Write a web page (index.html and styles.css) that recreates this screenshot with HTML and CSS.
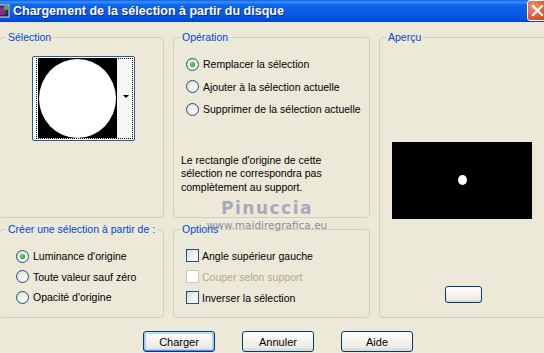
FILE: index.html
```html
<!DOCTYPE html>
<html lang="fr">
<head>
    <meta charset="UTF-8">
    <title>Chargement de la sélection à partir du disque</title>
    <link rel="stylesheet" href="styles.css">
</head>
<body>
    <div class="titlebar">
        <svg class="app-icon" width="16" height="16" viewBox="0 0 16 16">
            <rect x="1" y="2" width="14" height="12" fill="#2a2a3a"/>
            <circle cx="8" cy="8" r="4" fill="#8a2d8a"/>
            <rect x="10" y="3" width="4" height="4" fill="#3cb43c"/>
            <rect x="1" y="2" width="14" height="12" fill="none" stroke="#d8d8e8"/>
        </svg>
        <span class="title">Chargement de la sélection à partir du disque</span>
        <span class="close">
            <svg width="21" height="21" viewBox="0 0 21 21">
                <path d="M6 6 L15 15 M15 6 L6 15" stroke="#fff" stroke-width="2.2" stroke-linecap="square"/>
            </svg>
        </span>
    </div>

    <div class="panels">
        <fieldset class="group sel-group">
            <legend>Sélection</legend>
            <div class="thumb">
                <div class="thumb-img"><div class="thumb-circle"></div></div>
                <div class="thumb-strip"><span class="arrow"></span></div>
            </div>
        </fieldset>

        <fieldset class="group op-group">
            <legend>Opération</legend>
            <div class="options op-list">
                <label class="row"><span class="radio checked"></span>Remplacer la sélection</label>
                <label class="row"><span class="radio"></span>Ajouter à la sélection actuelle</label>
                <label class="row"><span class="radio"></span>Supprimer de la sélection actuelle</label>
            </div>
            <p class="note">Le rectangle d'origine de cette<br>sélection ne correspondra pas<br>complètement au support.</p>
        </fieldset>

        <fieldset class="group preview-group">
            <legend>Aperçu</legend>
            <div class="preview"><span class="dot"></span></div>
            <button class="btn small-btn"></button>
        </fieldset>

        <fieldset class="group src-group">
            <legend>Créer une sélection à partir de :</legend>
            <div class="options src-list">
                <label class="row"><span class="radio checked"></span>Luminance d'origine</label>
                <label class="row"><span class="radio"></span>Toute valeur sauf zéro</label>
                <label class="row"><span class="radio"></span>Opacité d'origine</label>
            </div>
        </fieldset>

        <fieldset class="group opt-group">
            <legend>Options</legend>
            <div class="options chk-list">
                <label class="row"><span class="check"></span>Angle supérieur gauche</label>
                <label class="row disabled"><span class="check"></span>Couper selon support</label>
                <label class="row"><span class="check"></span>Inverser la sélection</label>
            </div>
        </fieldset>
    </div>

    <div class="buttons">
        <button class="btn default">Charger</button>
        <button class="btn">Annuler</button>
        <button class="btn">Aide</button>
    </div>

    <div class="watermark">
        <span class="wm-name">Pinuccia</span>
        <span class="wm-url">www.maidiregrafica.eu</span>
    </div>
</body>
</html>
```

FILE: styles.css
```css
html, body {
    margin: 0;
    padding: 0;
}
body {
    width: 544px;
    height: 353px;
    overflow: hidden;
    position: relative;
    background: #ece9d8;
    font-family: "Liberation Sans", Arial, sans-serif;
    font-size: 10.5px;
    color: #000;
}

/* barre de titre */
.titlebar {
    height: 22px;
    display: flex;
    align-items: center;
    background: linear-gradient(#0a5fe6 0, #3b8fff 2px, #0b63ec 5px, #0858e6 15px, #0552dd 19px, #0342c0 22px);
    color: #fff;
    position: relative;
}
.app-icon {
    margin-left: -6px;
    flex: none;
}
.title {
    margin-left: 3px;
    font-weight: bold;
    font-size: 12.5px;
    text-shadow: 1px 1px 0 #0a2a8a;
}
.close {
    position: absolute;
    left: 527px;
    top: 0;
    width: 21px;
    height: 21px;
    border: 1px solid #fff;
    border-radius: 3px;
    box-sizing: border-box;
    background: radial-gradient(circle at 30% 30%, #f0937a, #e35a33 55%, #c8401c);
}
.close svg {
    display: block;
    margin: -1px;
}

/* groupes */
.panels {
    display: grid;
    grid-template-columns: 165px 197px 175px;
    grid-template-rows: 187px 95px;
    column-gap: 9px;
    row-gap: 5px;
    margin: 9px 0 0 -1px;
}
.group {
    margin: 0;
    padding: 0;
    border: 1px solid #d0d0bf;
    border-radius: 4px;
    min-width: 0;
}
.group legend {
    margin-left: 6px;
    padding: 0 2px;
    line-height: 13px;
    white-space: nowrap;
    color: #0046d5;
}
.preview-group {
    grid-column: 3;
    grid-row: 1 / 3;
}
.src-group { grid-column: 1; grid-row: 2; }
.opt-group { grid-column: 2; grid-row: 2; }

/* miniature */
.thumb {
    margin: 12px 0 0 32px;
    width: 103px;
    height: 85px;
    box-sizing: border-box;
    border: 1px solid #2f5b8c;
    border-radius: 2px;
    background: #fff;
    display: flex;
    padding: 1px 4px 2px 5px;
    position: relative;
}
.thumb::after {
    content: "";
    position: absolute;
    inset: 1px 1px 1px 3px;
    border: 1px dotted #000;
}
.thumb-img {
    width: 79px;
    height: 80px;
    background: #000;
    display: flex;
    align-items: center;
    justify-content: center;
}
.thumb-circle {
    width: 77px;
    height: 79px;
    border-radius: 50%;
    background: #fff;
}
.thumb-strip {
    flex: 1;
    background: #f6f6f4;
    position: relative;
}
.arrow {
    position: absolute;
    right: 1px;
    top: 37px;
    border-left: 3px solid transparent;
    border-right: 3px solid transparent;
    border-top: 3px solid #000;
}

/* boutons radio / cases */
.options .row {
    display: flex;
    align-items: center;
    gap: 4px;
    white-space: nowrap;
}
.op-list {
    margin: 9px 0 0 12px;
}
.op-list .row { height: 22.5px; }
.src-list {
    margin: 10px 0 0 16px;
}
.src-list .row { height: 20.5px; }
.chk-list {
    margin: 9px 0 0 12px;
}
.chk-list .row {
    height: 21px;
    gap: 3px;
}
.radio {
    width: 13px;
    height: 13px;
    box-sizing: border-box;
    border: 1px solid #1c5180;
    border-radius: 50%;
    background: radial-gradient(circle at 65% 65%, #fff 0, #f4f4f1 30%, #d6d5cd 100%);
    flex: none;
    position: relative;
}
.radio.checked::after {
    content: "";
    position: absolute;
    left: 3px;
    top: 3px;
    width: 5px;
    height: 5px;
    border-radius: 50%;
    background: radial-gradient(circle at 40% 40%, #6fe06f, #21a121 70%);
}
.check {
    width: 13px;
    height: 13px;
    box-sizing: border-box;
    border: 1px solid #1c5180;
    background: linear-gradient(135deg, #d9d8d0, #f6f6f3 60%, #fff);
    flex: none;
}
.row.disabled {
    color: #aca899;
}
.row.disabled .check {
    border-color: #cac8bb;
    background: #fff;
}
.note {
    margin: 33px 0 0 7px;
    line-height: 13.5px;
}

/* aperçu */
.preview {
    margin: 98px 0 0 12px;
    width: 140px;
    height: 77px;
    background: #000;
    position: relative;
}
.dot {
    position: absolute;
    left: 66px;
    top: 33px;
    width: 9px;
    height: 10px;
    border-radius: 50%;
    background: #fff;
}

/* boutons */
.btn {
    font-family: inherit;
    font-size: 11px;
    color: #000;
    border: 1px solid #003c74;
    border-radius: 3px;
    background: linear-gradient(#ffffff 0, #f5f4ef 40%, #ecebe5 80%, #d8d4c8 100%);
    padding: 0;
}
.small-btn {
    display: block;
    margin: 67px 0 0 65px;
    width: 37px;
    height: 17px;
}
.buttons {
    display: flex;
    gap: 27px;
    margin: 13px 0 0 143px;
}
.buttons .btn {
    width: 72px;
    height: 21px;
}
.btn.default {
    box-shadow: inset 0 1px 0 #cee7ff, inset 0 -1px 0 #6982ee, inset 1px 0 0 #a2c4f6, inset -1px 0 0 #a2c4f6, inset 0 0 0 2px #b7d1f6;
}

/* filigrane */
.watermark {
    position: absolute;
    left: 205px;
    top: 198px;
    width: 124px;
    display: flex;
    flex-direction: column;
    align-items: center;
    pointer-events: none;
}
.wm-name {
    font-family: "DejaVu Sans", sans-serif;
    font-weight: bold;
    font-size: 17px;
    letter-spacing: 1.5px;
    color: #a9a9bd;
    line-height: 20px;
}
.wm-url {
    font-family: "DejaVu Sans", sans-serif;
    font-size: 10.5px;
    color: #8c8c98;
    line-height: 14px;
    margin-top: 0;
}
```
